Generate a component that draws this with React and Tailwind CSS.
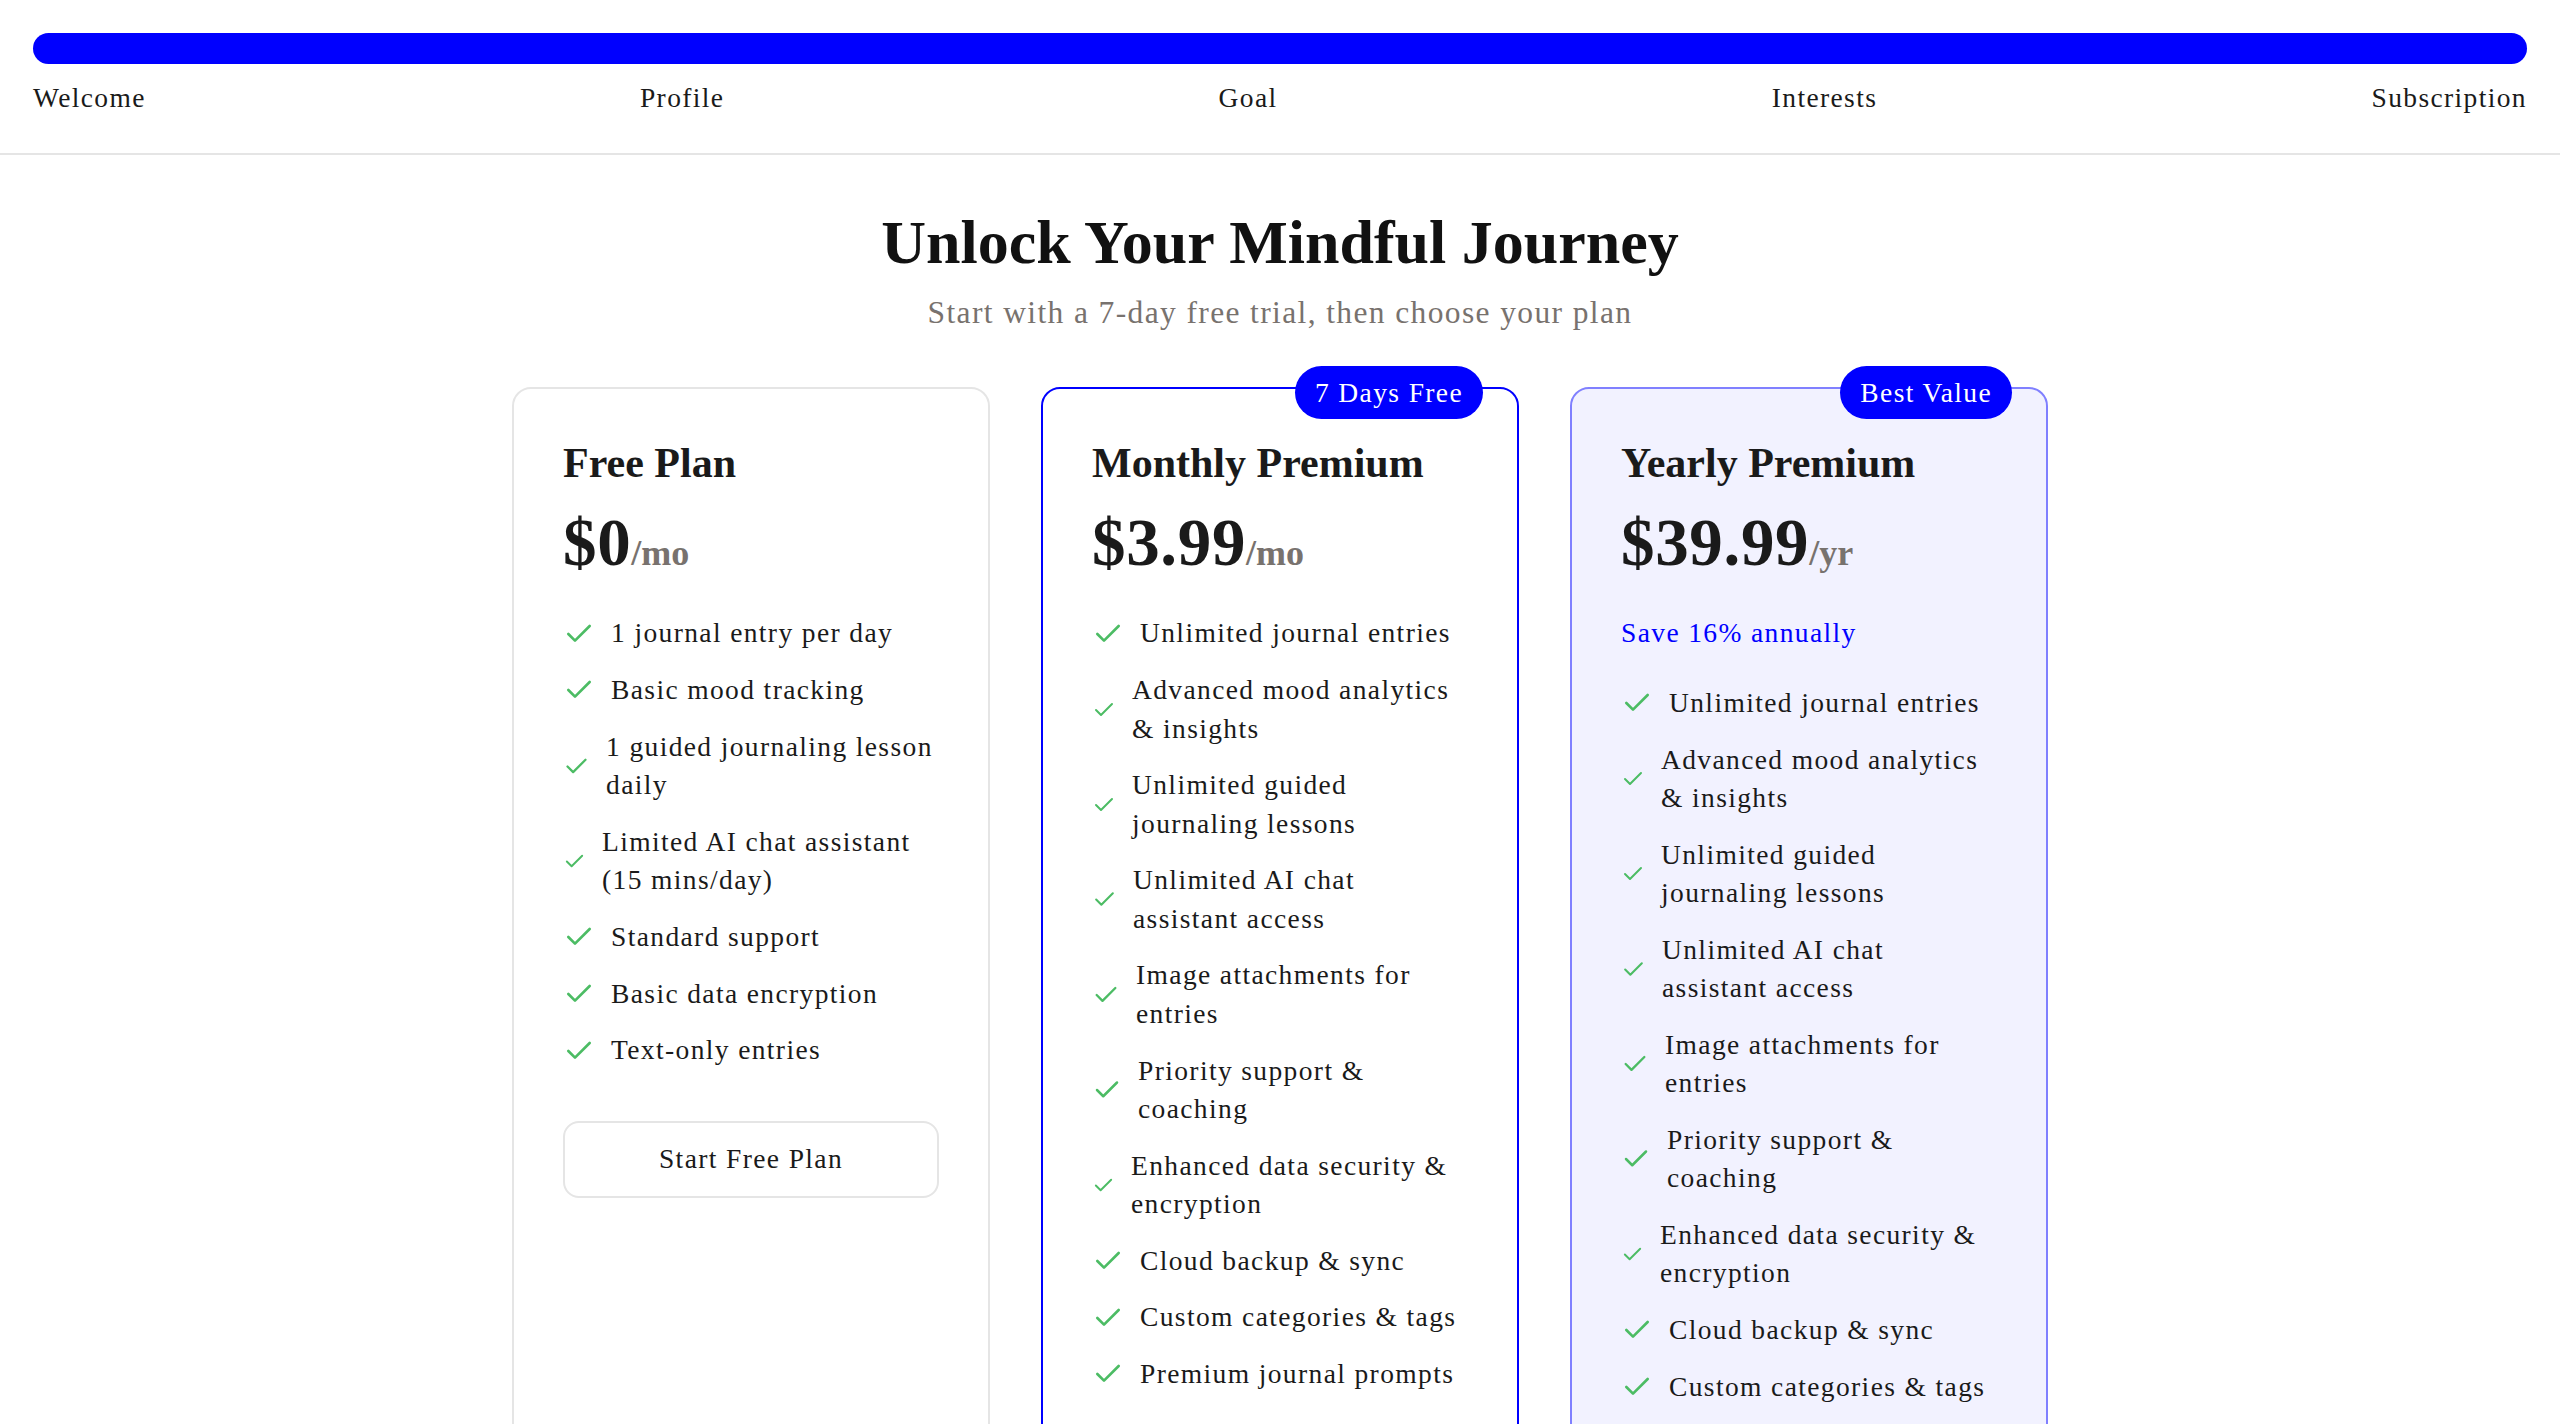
import React from "react";

const steps = ["Welcome", "Profile", "Goal", "Interests", "Subscription"];

// icon size per feature: the check shrinks when the text wraps, as in the design
const premiumFeatures = [
  [32, ["Unlimited journal entries"]],
  [24, ["Advanced mood analytics", "& insights"]],
  [24, ["Unlimited guided", "journaling lessons"]],
  [25, ["Unlimited AI chat", "assistant access"]],
  [28, ["Image attachments for", "entries"]],
  [30, ["Priority support &", "coaching"]],
  [23, ["Enhanced data security &", "encryption"]],
  [32, ["Cloud backup & sync"]],
  [32, ["Custom categories & tags"]],
  [32, ["Premium journal prompts"]],
];

const plans = [
  {
    name: "Free Plan",
    price: "$0",
    unit: "/mo",
    card: "border-[#e5e5e5] bg-white",
    features: [
      [32, ["1 journal entry per day"]],
      [32, ["Basic mood tracking"]],
      [27, ["1 guided journaling lesson", "daily"]],
      [23, ["Limited AI chat assistant", "(15 mins/day)"]],
      [32, ["Standard support"]],
      [32, ["Basic data encryption"]],
      [32, ["Text-only entries"]],
    ],
    button: "Start Free Plan",
    buttonClass: "border-2 border-[#e5e5e5] bg-white text-[#1a1a1a]",
  },
  {
    name: "Monthly Premium",
    price: "$3.99",
    unit: "/mo",
    badge: "7 Days Free",
    card: "border-[#0000ff] bg-white",
    features: premiumFeatures,
    button: "Start 7-Day Free Trial",
    buttonClass: "bg-[#0000ff] text-white",
  },
  {
    name: "Yearly Premium",
    price: "$39.99",
    unit: "/yr",
    badge: "Best Value",
    save: "Save 16% annually",
    card: "border-[#8080ff] bg-[#f2f2ff]",
    features: premiumFeatures,
    button: "Start 7-Day Free Trial",
    buttonClass: "bg-[#0000ff] text-white",
  },
];

function Check({ size }) {
  return (
    <svg
      width={size}
      height={size}
      viewBox="0 0 24 24"
      fill="none"
      stroke="currentColor"
      strokeWidth="2"
      strokeLinecap="round"
      strokeLinejoin="round"
      className="shrink-0 text-[#4cbc64]"
    >
      <path d="M20 6 9 17l-5-5" />
    </svg>
  );
}

function PlanCard({ plan }) {
  return (
    <div className={"relative flex flex-col rounded-[19px] border-2 px-[49px] pt-[49px] pb-[49px] " + plan.card}>
      {plan.badge && (
        <span className="absolute top-[-23px] right-[34px] flex h-[53px] items-center rounded-full bg-[#0000ff] px-[20px] text-white">
          {plan.badge}
        </span>
      )}
      <h2 className="text-[42px] leading-[51px] font-bold tracking-normal">{plan.name}</h2>
      <div className="mt-[21px] flex items-baseline leading-[64px] tracking-normal">
        <span className="text-[67px] font-bold tracking-[0.01em]">{plan.price}</span>
        <span className="text-[36px] font-bold text-[#78726e]">{plan.unit}</span>
      </div>
      {plan.save && <p className="mt-[29px] text-[#0000ff]">{plan.save}</p>}
      <ul className={"flex flex-col gap-[18.3px] " + (plan.save ? "mt-[31px]" : "mt-[29px]")}>
        {plan.features.map(([size, lines]) => (
          <li key={lines[0]} className="flex items-center gap-[16px]">
            <Check size={size} />
            <span>
              {lines.map((l, i) => (
                <React.Fragment key={i}>
                  {i > 0 && <br />}
                  {l}
                </React.Fragment>
              ))}
            </span>
          </li>
        ))}
      </ul>
      <button className={"mt-[51px] h-[77px] w-full rounded-[16px] " + plan.buttonClass}>{plan.button}</button>
    </div>
  );
}

export default function App() {
  return (
    <div className="min-h-screen bg-white font-['Liberation_Serif',serif] text-[27.5px] leading-[38.4px] tracking-[0.05em] text-[#1a1a1a]">
      <div className="border-b-2 border-[#e5e5e5] px-[33px] pt-[33px] pb-[36px]">
        <div className="h-[31px] w-full rounded-full bg-[#0000ff]"></div>
        <div className="mt-[15px] flex justify-between">
          {steps.map((s) => (
            <span key={s}>{s}</span>
          ))}
        </div>
      </div>

      <div className="pt-[51px] pb-[80px]">
        <h1 className="text-center text-[62px] leading-[72px] font-bold tracking-normal text-[#111]">
          Unlock Your Mindful Journey
        </h1>
        <p className="mt-[13px] text-center text-[31.5px] leading-[43px] text-[#78726e]">
          Start with a 7-day free trial, then choose your plan
        </p>
        <div className="mx-auto mt-[53px] grid w-[1536px] grid-cols-3 gap-[51px]">
          {plans.map((p) => (
            <PlanCard key={p.name} plan={p} />
          ))}
        </div>
      </div>
    </div>
  );
}
